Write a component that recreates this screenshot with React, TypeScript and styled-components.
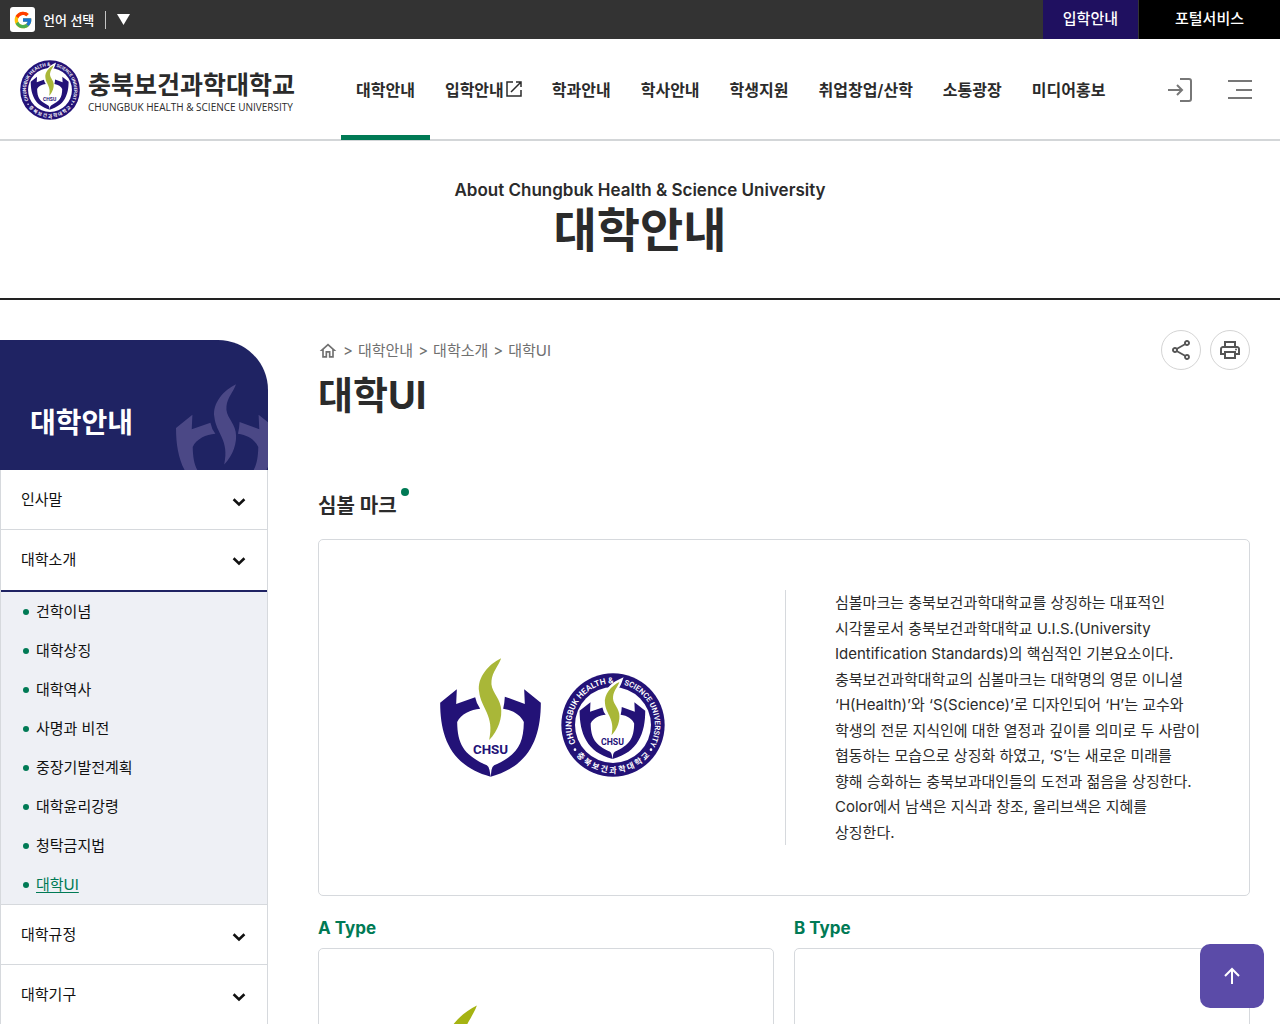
import React from "react";
import styled, { createGlobalStyle } from "styled-components";
import { FcGoogle } from "react-icons/fc";
import { MdOutlineHome, MdOutlineLocalPrintshop, MdOutlineShare } from "react-icons/md";

const color = {
  green: "#007a55",
  navy: "#1f2363",
  logoNavy: "#231277",
  olive: "#a9b738",
  ink: "#2b2b2b",
  line: "#d6d9dd",
};

const GlobalStyle = createGlobalStyle`
  * { box-sizing: border-box; }
  body {
    margin: 0;
    background: #fff;
    color: ${color.ink};
    font-family: Inter, "Noto Sans CJK KR", sans-serif;
    font-size: 15px;
    word-break: keep-all;
  }
  h1, h2, h3, p, ul, ol { margin: 0; padding: 0; }
  ul, ol { list-style: none; }
  a { color: inherit; text-decoration: none; }
  button { border: 0; padding: 0; background: none; color: inherit; font: inherit; cursor: pointer; }
  svg { display: block; flex-shrink: 0; }
`;

/* ---------- top bar ---------- */

const TopBar = styled.div`
  display: flex;
  justify-content: space-between;
  height: 39px;
  background: #333;
  color: #fff;
`;

const LanguageButton = styled.button`
  display: flex;
  align-items: center;
  margin-left: 10px;
  font-size: 13px;
  font-weight: 500;
`;

const GoogleBadge = styled.span`
  display: grid;
  place-items: center;
  width: 25px;
  height: 25px;
  margin-right: 8px;
  border-radius: 3px;
  background: #fff;
`;

const LanguageArrow = styled.span`
  display: flex;
  align-items: center;
  height: 18px;
  margin-left: 11px;
  padding-left: 11px;
  border-left: 1px solid #c4c4c4;
`;

const Shortcuts = styled.nav`
  display: flex;
`;

const Shortcut = styled.a<{ $bg: string; $pad: number }>`
  padding: 0 ${(p) => p.$pad}px;
  border-left: 1px solid #333;
  background: ${(p) => p.$bg};
  font-weight: 500;
  line-height: 38px;
`;

/* ---------- header ---------- */

const Header = styled.header`
  display: flex;
  align-items: center;
  height: 102px;
  padding: 2px 28px 0 20px;
  border-bottom: 2px solid #d3d6d8;
`;

const LogoLink = styled.a`
  display: flex;
  align-items: center;
  gap: 8px;
  white-space: nowrap;
`;

const LogoKorean = styled.span`
  display: block;
  font-family: "Noto Sans CJK KR", sans-serif;
  font-size: 25px;
  font-weight: 700;
  line-height: 33px;
`;

const LogoEnglish = styled.span`
  display: block;
  font-family: "Open Sans", sans-serif;
  font-size: 10px;
  font-weight: 500;
  line-height: 14px;
`;

const MainNav = styled.nav`
  margin-left: 46px;
`;

const NavList = styled.ul`
  display: flex;
`;

const NavLink = styled.a<{ $active?: boolean }>`
  position: relative;
  display: flex;
  align-items: center;
  gap: 2px;
  height: 100px;
  padding: 0 15px 2px;
  font-size: 16px;
  font-weight: 600;
  white-space: nowrap;
  &::after {
    content: "";
    display: ${(p) => (p.$active ? "block" : "none")};
    position: absolute;
    left: 0;
    right: 0;
    bottom: 0;
    height: 5px;
    background: ${color.green};
  }
`;

const HeaderActions = styled.div`
  display: flex;
  gap: 36px;
  margin-left: auto;
  color: #777;
`;

/* ---------- page title ---------- */

const Hero = styled.section`
  padding: 36px 20px 41px;
  border-bottom: 2px solid #222;
  text-align: center;
`;

const HeroCaption = styled.p`
  font-size: 17px;
  font-weight: 600;
  line-height: 26px;
`;

const HeroTitle = styled.h2`
  font-size: 47px;
  font-weight: 700;
  line-height: 54px;
`;

/* ---------- layout ---------- */

const Columns = styled.div`
  display: grid;
  grid-template-columns: 268px minmax(0, 1fr);
  column-gap: 50px;
  padding: 30px 30px 60px 0;
`;

/* ---------- sidebar ---------- */

const Sidebar = styled.aside`
  margin-top: 10px;
`;

const SideTitle = styled.div`
  position: relative;
  overflow: hidden;
  height: 130px;
  padding: 64px 30px 0;
  border-radius: 0 50px 0 0;
  background: ${color.navy};
  color: #fff;
  h2 {
    font-size: 28px;
    font-weight: 700;
    line-height: 38px;
  }
  svg {
    position: absolute;
    top: 44px;
    right: -7px;
  }
`;

const SideMenu = styled.ul`
  border: solid ${color.line};
  border-width: 0 1px;
  color: #111;
`;

const SideButton = styled.button<{ $open?: boolean }>`
  display: flex;
  align-items: center;
  justify-content: space-between;
  width: 100%;
  height: ${(p) => (p.$open ? 62 : 60)}px;
  padding: 0 21px ${(p) => (p.$open ? 4 : 2)}px 20px;
  border-bottom: ${(p) => (p.$open ? `2px solid ${color.navy}` : `1px solid ${color.line}`)};
  svg { margin-top: 6px; }
`;

const SubMenu = styled.ul`
  border-bottom: 1px solid ${color.line};
  background: #eef0f5;
`;

const SubLink = styled.a<{ $current?: boolean }>`
  display: flex;
  align-items: center;
  gap: 7px;
  height: 39px;
  padding: 0 22px 3px;
  color: ${(p) => (p.$current ? color.green : "inherit")};
  text-decoration: ${(p) => (p.$current ? "underline" : "none")};
  text-underline-offset: 2px;
  &::before {
    content: "";
    width: 6px;
    height: 6px;
    margin-top: 3px;
    border-radius: 50%;
    background: ${color.green};
  }
`;

/* ---------- content ---------- */

const PageBar = styled.div`
  display: flex;
  align-items: center;
  justify-content: space-between;
  height: 40px;
`;

const Breadcrumb = styled.ol`
  display: flex;
  align-items: center;
  padding-bottom: 2px;
  color: #707070;
  svg { margin-top: 3px; }
  li + li::before { content: ">"; margin: 0 5px; }
`;

const PageTools = styled.div`
  display: flex;
  gap: 9px;
`;

const RoundButton = styled.button`
  display: grid;
  place-items: center;
  width: 40px;
  height: 40px;
  border: 1px solid #d4d4d4;
  border-radius: 50%;
  color: #555;
`;

const PageTitle = styled.h1`
  font-size: 38px;
  font-weight: 700;
  line-height: 50px;
`;

const SectionTitle = styled.h2`
  display: flex;
  gap: 4px;
  margin: 68px 0 15px;
  font-size: 20px;
  font-weight: 600;
  line-height: 36px;
  &::after {
    content: "";
    width: 8px;
    height: 8px;
    border-radius: 50%;
    background: ${color.green};
  }
`;

const Card = styled.div`
  border: 1px solid ${color.line};
  border-radius: 5px;
`;

const SymbolCard = styled(Card)`
  display: grid;
  grid-template-columns: 1fr 1fr;
  padding: 50px 48px 50px 50px;
`;

const SymbolFigure = styled.div`
  display: flex;
  align-items: center;
  justify-content: center;
  padding-right: 50px;
`;

const MarkPair = styled.div<{ $gap: number }>`
  display: flex;
  align-items: flex-end;
  gap: ${(p) => p.$gap}px;
`;

const SymbolText = styled.p`
  padding-left: 49px;
  border-left: 1px solid ${color.line};
  line-height: 1.7;
`;

const TypeGrid = styled.div`
  display: grid;
  grid-template-columns: 1fr 1fr;
  gap: 20px;
  margin-top: 20px;
`;

const TypeBlock = styled.section`
  display: flex;
  flex-direction: column;
`;

const TypeTitle = styled.h3`
  margin-bottom: 8px;
  color: ${color.green};
  font-size: 17px;
  font-weight: 700;
  line-height: 24px;
`;

const TypeCard = styled(Card)`
  display: flex;
  align-items: center;
  justify-content: center;
  flex: 1;
  padding: 56px 50px;
`;

const TopButton = styled.button`
  position: fixed;
  right: 16px;
  bottom: 16px;
  display: grid;
  place-items: center;
  width: 64px;
  height: 64px;
  border-radius: 10px;
  background: #5b4ba8;
  color: #fff;
`;

/* ---------- university marks ---------- */

const FLAME =
  "M241 55 C205 72 168 112 175 155 C180 205 222 225 205 300 C232 272 246 232 240 200 C234 168 208 152 212 122 C215 95 232 80 241 55Z";
const ARM_LEFT =
  "M58 188 L108 148 L106 192 L163 172 Q167 192 178 206 C150 208 120 222 109 246 C110 315 130 345 198 376 Q204 380 206 390 L209.500 410 C90 378 58 290 58 188Z";
const ARM_RIGHT =
  "M360 188 L310 148 L312 192 L252 170 Q251 190 247 206 C278 210 300 226 309 246 C308 315 288 345 220 376 Q214 380 212 390 L209.500 410 C328 378 360 290 360 188Z";

function ShieldShape({ body, flame, word }: { body: string; flame: string; word?: boolean }) {
  return (
    <>
      <path d={ARM_LEFT} fill={body} />
      <path d={ARM_RIGHT} fill={body} />
      <path d={FLAME} fill={flame} />
      {word && (
        <text x="209" y="343" textAnchor="middle" fontFamily="Roboto, sans-serif" fontWeight="700" fontSize="40" fill={body}>
          CHSU
        </text>
      )}
    </>
  );
}

function Shield({ width, body = color.logoNavy, flame = color.olive, word = true }: { width: number; body?: string; flame?: string; word?: boolean }) {
  return (
    <svg width={width} height={Math.round((width * 357) / 302)} viewBox="58 54 302 357" aria-hidden="true">
      <ShieldShape body={body} flame={flame} word={word} />
    </svg>
  );
}

function Seal({ size, id }: { size: number; id: string }) {
  const ringFont = { fontFamily: "Roboto, sans-serif", fontWeight: 600, fill: "#fff" };
  return (
    <svg width={size} height={size} viewBox="-156 -156 312 312" aria-hidden="true">
      <defs>
        <path id={id} d="M0 125 A125 125 0 1 1 1 125" />
      </defs>
      <circle r="155" fill={color.logoNavy} />
      <circle r="114" fill="#fff" />
      <text {...ringFont} fontSize="25">
        <textPath href={`#${id}`} startOffset="139">CHUNGBUK HEALTH &amp;</textPath>
      </text>
      <text {...ringFont} fontSize="23">
        <textPath href={`#${id}`} startOffset="424">SCIENCE UNIVERSITY</textPath>
      </text>
      <circle cx="-114" cy="74" r="4" fill="#fff" />
      <circle cx="114" cy="74" r="4" fill="#fff" />
      {Array.from("충북보건과학대학교").map((c, i) => (
        <text
          key={i}
          transform={`rotate(${46 - i * 11.5})`}
          y="143"
          textAnchor="middle"
          fontFamily="Noto Sans CJK KR, sans-serif"
          fontWeight="700"
          fontSize="24"
          fill="#fff"
        >
          {c}
        </text>
      ))}
      <g transform="translate(-138 -165) scale(.652)">
        <path d={FLAME} fill="#fff" stroke="#fff" strokeWidth="22" />
        <ShieldShape body={color.logoNavy} flame={color.olive} word />
      </g>
    </svg>
  );
}

function Logo({ id }: { id: string }) {
  return (
    <LogoLink href="#">
      <Seal size={60} id={id} />
      <span>
        <LogoKorean>충북보건과학대학교</LogoKorean>
        <LogoEnglish>CHUNGBUK HEALTH &amp; SCIENCE UNIVERSITY</LogoEnglish>
      </span>
    </LogoLink>
  );
}

/* ---------- small icons ---------- */

const ExternalIcon = () => (
  <svg width="16" height="16" viewBox="0 0 16 16" fill="none" stroke="currentColor" strokeWidth="1.5" aria-hidden="true">
    <path d="M7 1H1v14h14V9M10 1h5v5M15 1 5 11" />
  </svg>
);

const Chevron = () => (
  <svg width="14" height="10" viewBox="0 0 14 10" fill="none" stroke="#111" strokeWidth="2.600" aria-hidden="true">
    <path d="M1.600 2.200 7 7.400l5.400-5.200" />
  </svg>
);

const LoginIcon = () => (
  <svg width="24" height="24" viewBox="0 0 24 24" fill="none" stroke="currentColor" strokeWidth="2" aria-hidden="true">
    <path d="M12 1h9q2 0 2 2v18q0 2-2 2h-9M0 12h14M9 7l5 5-5 5" />
  </svg>
);

const MenuIcon = () => (
  <svg width="24" height="24" viewBox="0 0 24 24" fill="none" stroke="currentColor" strokeWidth="2" aria-hidden="true">
    <path d="M0 3h24M8 12h16M0 20h24" />
  </svg>
);

const ArrowUpIcon = () => (
  <svg width="20" height="20" viewBox="0 0 20 20" fill="none" stroke="currentColor" strokeWidth="2" aria-hidden="true">
    <path d="M10 18V3M3 10l7-7 7 7" />
  </svg>
);

const navItems = ["대학안내", "입학안내", "학과안내", "학사안내", "학생지원", "취업창업/산학", "소통광장", "미디어홍보"];
const sideItems = ["인사말", "대학소개", "대학규정", "대학기구"];
const subItems = ["건학이념", "대학상징", "대학역사", "사명과 비전", "중장기발전계획", "대학윤리강령", "청탁금지법", "대학UI"];

export default function App() {
  return (
    <>
      <GlobalStyle />
      <TopBar>
        <LanguageButton type="button">
          <GoogleBadge>
            <FcGoogle size={20} />
          </GoogleBadge>
          언어 선택
          <LanguageArrow>
            <svg width="13" height="11" viewBox="0 0 13 11" fill="#fff" aria-hidden="true">
              <path d="M0 0h13L6.500 11z" />
            </svg>
          </LanguageArrow>
        </LanguageButton>
        <Shortcuts>
          <Shortcut href="#" $bg="#1f1060" $pad={20}>입학안내</Shortcut>
          <Shortcut href="#" $bg="#000" $pad={36}>포털서비스</Shortcut>
        </Shortcuts>
      </TopBar>

      <Header>
        <Logo id="ring-header" />
        <MainNav>
          <NavList>
            {navItems.map((label, i) => (
              <li key={label}>
                <NavLink href="#" $active={i === 0}>
                  {label}
                  {i === 1 && <ExternalIcon />}
                </NavLink>
              </li>
            ))}
          </NavList>
        </MainNav>
        <HeaderActions>
          <button type="button" aria-label="로그인"><LoginIcon /></button>
          <button type="button" aria-label="전체메뉴"><MenuIcon /></button>
        </HeaderActions>
      </Header>

      <Hero>
        <HeroCaption>About Chungbuk Health &amp; Science University</HeroCaption>
        <HeroTitle>대학안내</HeroTitle>
      </Hero>

      <Columns>
        <Sidebar>
          <SideTitle>
            <h2>대학안내</h2>
            <Shield width={99} body="#4b4886" flame="#4b4886" word={false} />
          </SideTitle>
          <SideMenu>
            {sideItems.map((label, i) => (
              <li key={label}>
                <SideButton type="button" $open={i === 1}>
                  {label}
                  <Chevron />
                </SideButton>
                {i === 1 && (
                  <SubMenu>
                    {subItems.map((sub) => (
                      <li key={sub}>
                        <SubLink href="#" $current={sub === "대학UI"}>{sub}</SubLink>
                      </li>
                    ))}
                  </SubMenu>
                )}
              </li>
            ))}
          </SideMenu>
        </Sidebar>

        <main>
          <PageBar>
            <Breadcrumb>
              <li><a href="#" aria-label="홈"><MdOutlineHome size={20} /></a></li>
              <li><a href="#">대학안내</a></li>
              <li><a href="#">대학소개</a></li>
              <li><a href="#">대학UI</a></li>
            </Breadcrumb>
            <PageTools>
              <RoundButton type="button" aria-label="공유"><MdOutlineShare size={24} /></RoundButton>
              <RoundButton type="button" aria-label="인쇄"><MdOutlineLocalPrintshop size={24} /></RoundButton>
            </PageTools>
          </PageBar>
          <PageTitle>대학UI</PageTitle>

          <SectionTitle>심볼 마크</SectionTitle>
          <SymbolCard>
            <SymbolFigure>
              <MarkPair $gap={20}>
                <Shield width={101} />
                <Seal size={104} id="ring-symbol" />
              </MarkPair>
            </SymbolFigure>
            <SymbolText>
              심볼마크는 충북보건과학대학교를 상징하는 대표적인 시각물로서 충북보건과학대학교 U.I.S.(University
              Identification Standards)의 핵심적인 기본요소이다. 충북보건과학대학교의 심볼마크는 대학명의 영문 이니셜
              ‘H(Health)’와 ‘S(Science)’로 디자인되어 ‘H’는 교수와 학생의 전문 지식인에 대한 열정과 깊이를 의미로 두
              사람이 협동하는 모습으로 상징화 하였고, ‘S’는 새로운 미래를 향해 승화하는 충북보과대인들의 도전과
              젊음을 상징한다. Color에서 남색은 지식과 창조, 올리브색은 지혜를 상징한다.
            </SymbolText>
          </SymbolCard>

          <TypeGrid>
            <TypeBlock>
              <TypeTitle>A Type</TypeTitle>
              <TypeCard>
                <MarkPair $gap={30}>
                  <Shield width={150} flame="#a5b312" />
                  <Seal size={140} id="ring-a" />
                </MarkPair>
              </TypeCard>
            </TypeBlock>
            <TypeBlock>
              <TypeTitle>B Type</TypeTitle>
              <TypeCard>
                <Logo id="ring-b" />
              </TypeCard>
            </TypeBlock>
          </TypeGrid>
        </main>
      </Columns>

      <TopButton type="button" aria-label="맨 위로"><ArrowUpIcon /></TopButton>
    </>
  );
}
